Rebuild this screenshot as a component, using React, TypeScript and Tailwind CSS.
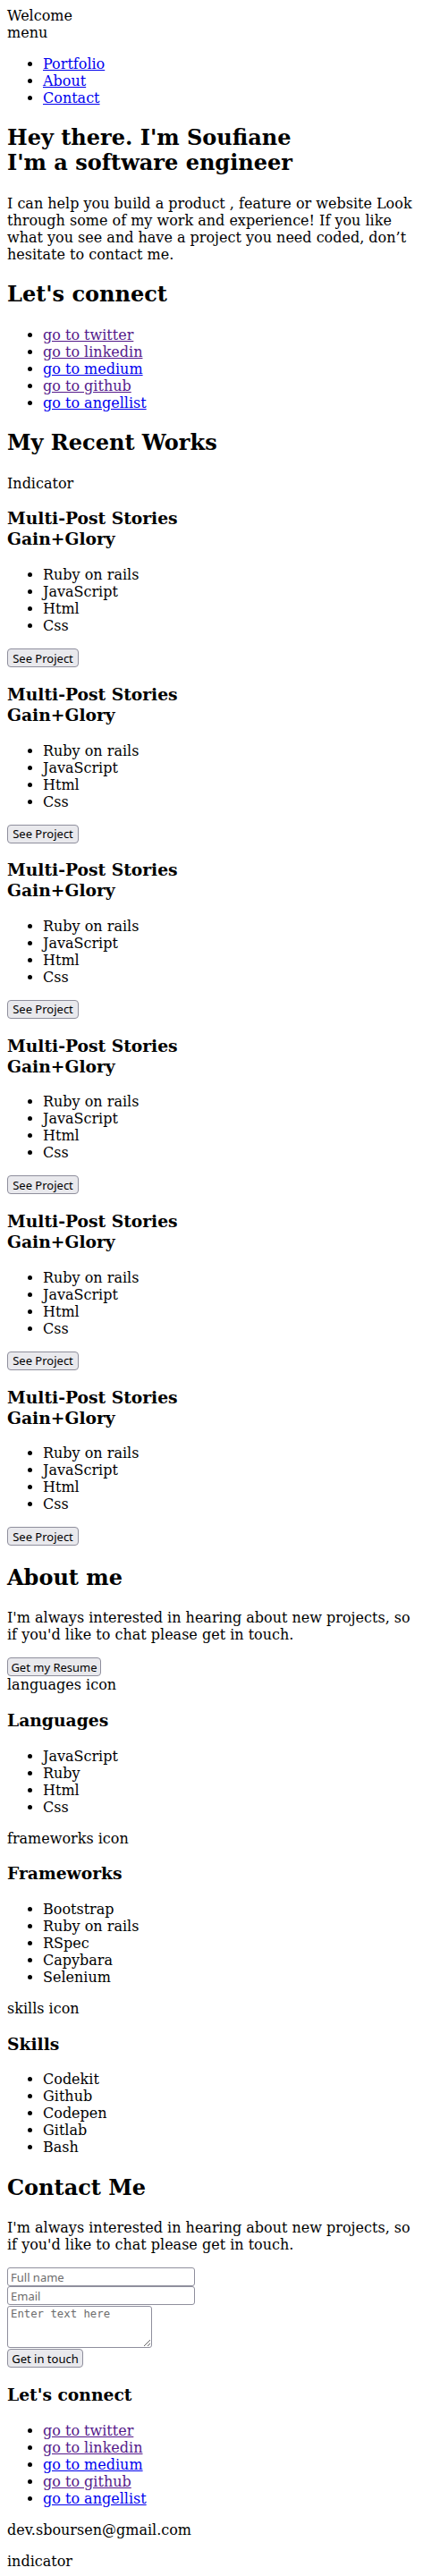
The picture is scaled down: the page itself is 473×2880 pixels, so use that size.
import React from "react";

const projects = Array.from({ length: 6 }, (_, i) => ({
  id: i,
  title: "Multi-Post Stories",
  subtitle: "Gain+Glory",
  tags: ["Ruby on rails", "JavaScript", "Html", "Css"],
}));

const socials = [
  { label: "go to twitter", visited: true },
  { label: "go to linkedin", visited: true },
  { label: "go to medium", visited: false },
  { label: "go to github", visited: true },
  { label: "go to angellist", visited: false },
];

const groups = [
  { icon: "languages icon", title: "Languages", items: ["JavaScript", "Ruby", "Html", "Css"] },
  {
    icon: "frameworks icon",
    title: "Frameworks",
    items: ["Bootstrap", "Ruby on rails", "RSpec", "Capybara", "Selenium"],
  },
  { icon: "skills icon", title: "Skills", items: ["Codekit", "Github", "Codepen", "Gitlab", "Bash"] },
];

function H2({ children }: { children: React.ReactNode }) {
  return <h2 className="my-[21.44px] text-[24px] font-bold leading-[28px]">{children}</h2>;
}

function H3({ children }: { children: React.ReactNode }) {
  return <h3 className="my-[18.72px] text-[18.72px] font-bold leading-[23px]">{children}</h3>;
}

function List({ items }: { items: string[] }) {
  return (
    <ul className="my-4 list-disc pl-10">
      {items.map((item) => (
        <li key={item}>{item}</li>
      ))}
    </ul>
  );
}

function Btn({ children, width }: { children: React.ReactNode; width: string }) {
  return (
    <button
      className={`block h-[21px] ${width} rounded-[4px] border border-[#8f8f9d] bg-[#e9e9ed] text-center font-['Noto_Sans',sans-serif] text-[13px] leading-[18px] text-black`}
    >
      {children}
    </button>
  );
}

function Socials() {
  return (
    <ul className="my-4 list-disc pl-10">
      {socials.map((s) => (
        <li key={s.label}>
          <a href="#" className={s.visited ? "text-[#551a8b] underline" : "text-[#0000ee] underline"}>
            {s.label}
          </a>
        </li>
      ))}
    </ul>
  );
}

export default function App() {
  return (
    <div className="m-2 bg-white font-['DejaVu_Serif',serif] text-[16px] leading-[19px] text-black">
      <header>
        <div>Welcome</div>
        <div>menu</div>
        <ul className="my-4 list-disc pl-10">
          {["Portfolio", "About", "Contact"].map((l) => (
            <li key={l}>
              <a href="#" className="text-[#0000ee] underline">
                {l}
              </a>
            </li>
          ))}
        </ul>
      </header>

      <section>
        <h2 className="my-[21.44px] text-[24px] font-bold leading-[28px]">
          Hey there. I'm Soufiane
          <br />
          I'm a software engineer
        </h2>
        <p className="my-4">
          I can help you build a product , feature or website Look through some of my work and experience! If you
          like what you see and have a project you need coded, don’t hesitate to contact me.
        </p>
        <H2>Let's connect</H2>
        <Socials />
      </section>

      <section>
        <H2>My Recent Works</H2>
        <p className="my-4">Indicator</p>
        {projects.map((p) => (
          <div key={p.id}>
            <H3>
              {p.title}
              <br />
              {p.subtitle}
            </H3>
            <List items={p.tags} />
            <Btn width="w-[80px]">See Project</Btn>
          </div>
        ))}
      </section>

      <section>
        <H2>About me</H2>
        <p className="my-4">
          I'm always interested in hearing about new projects, so if you'd like to chat please get in touch.
        </p>
        <Btn width="w-[105px]">Get my Resume</Btn>
        {groups.map((g) => (
          <div key={g.title}>
            <div>{g.icon}</div>
            <H3>{g.title}</H3>
            <List items={g.items} />
          </div>
        ))}
      </section>

      <section>
        <H2>Contact Me</H2>
        <p className="my-4">
          I'm always interested in hearing about new projects, so if you'd like to chat please get in touch.
        </p>
        <form>
          <input
            type="text"
            placeholder="Full name"
            className="block h-[21px] w-[210px] rounded-[3px] border border-[#8f8f9d] px-[3px] font-['Noto_Sans',sans-serif] text-[13px] placeholder:text-[#6d6d6d]"
          />
          <input
            type="email"
            placeholder="Email"
            className="block h-[21px] w-[210px] rounded-[3px] border border-[#8f8f9d] px-[3px] font-['Noto_Sans',sans-serif] text-[13px] placeholder:text-[#6d6d6d]"
          />
          <textarea
            placeholder="Enter text here"
            className="mt-px block h-[47px] w-[162px] rounded-[3px] border border-[#8f8f9d] px-[3px] py-px font-['DejaVu_Sans_Mono',monospace] text-[12.3px] leading-[15px] placeholder:text-[#6d6d6d]"
          />
          <div className="mt-px">
            <Btn width="w-[85px]">Get in touch</Btn>
          </div>
        </form>
        <H3>Let's connect</H3>
        <Socials />
        <p className="my-4">dev.sboursen@gmail.com</p>
        <p className="my-4">indicator</p>
      </section>
    </div>
  );
}
